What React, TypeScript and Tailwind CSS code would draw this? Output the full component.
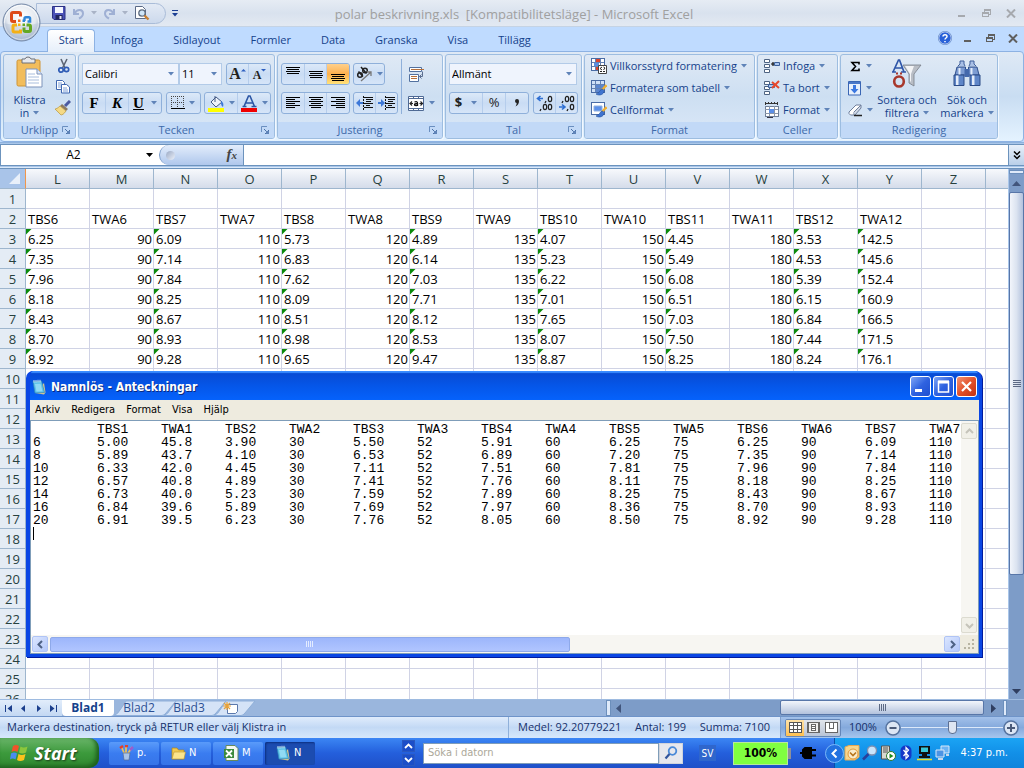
import React from "react";

const UI = "font-['Open_Sans','Noto_Sans',sans-serif]";
const TAHOMA = "font-['DejaVu_Sans_Condensed','Noto_Sans',sans-serif]";

const columns = ["L", "M", "N", "O", "P", "Q", "R", "S", "T", "U", "V", "W", "X", "Y", "Z"];

const sheetHeader = [
  "TBS6", "TWA6", "TBS7", "TWA7", "TBS8", "TWA8", "TBS9", "TWA9",
  "TBS10", "TWA10", "TBS11", "TWA11", "TBS12", "TWA12",
];

const sheetRows = [
  ["6.25", "90", "6.09", "110", "5.73", "120", "4.89", "135", "4.07", "150", "4.45", "180", "3.53", "142.5"],
  ["7.35", "90", "7.14", "110", "6.83", "120", "6.14", "135", "5.23", "150", "5.49", "180", "4.53", "145.6"],
  ["7.96", "90", "7.84", "110", "7.62", "120", "7.03", "135", "6.22", "150", "6.08", "180", "5.39", "152.4"],
  ["8.18", "90", "8.25", "110", "8.09", "120", "7.71", "135", "7.01", "150", "6.51", "180", "6.15", "160.9"],
  ["8.43", "90", "8.67", "110", "8.51", "120", "8.12", "135", "7.65", "150", "7.03", "180", "6.84", "166.5"],
  ["8.70", "90", "8.93", "110", "8.98", "120", "8.53", "135", "8.07", "150", "7.50", "180", "7.44", "171.5"],
  ["8.92", "90", "9.28", "110", "9.65", "120", "9.47", "135", "8.87", "150", "8.25", "180", "8.24", "176.1"],
];

const noteText = [
  ["", "TBS1", "TWA1", "TBS2", "TWA2", "TBS3", "TWA3", "TBS4", "TWA4", "TBS5", "TWA5", "TBS6", "TWA6", "TBS7", "TWA7"],
  ["6", "5.00", "45.8", "3.90", "30", "5.50", "52", "5.91", "60", "6.25", "75", "6.25", "90", "6.09", "110"],
  ["8", "5.89", "43.7", "4.10", "30", "6.53", "52", "6.89", "60", "7.20", "75", "7.35", "90", "7.14", "110"],
  ["10", "6.33", "42.0", "4.45", "30", "7.11", "52", "7.51", "60", "7.81", "75", "7.96", "90", "7.84", "110"],
  ["12", "6.57", "40.8", "4.89", "30", "7.41", "52", "7.76", "60", "8.11", "75", "8.18", "90", "8.25", "110"],
  ["14", "6.73", "40.0", "5.23", "30", "7.59", "52", "7.89", "60", "8.25", "75", "8.43", "90", "8.67", "110"],
  ["16", "6.84", "39.6", "5.89", "30", "7.69", "52", "7.97", "60", "8.36", "75", "8.70", "90", "8.93", "110"],
  ["20", "6.91", "39.5", "6.23", "30", "7.76", "52", "8.05", "60", "8.50", "75", "8.92", "90", "9.28", "110"],
]
  .map((r) => r.join("\t"))
  .join("\n");

function Caret({ color = "#5f83b8" }: { color?: string }) {
  return (
    <svg width="6" height="4" viewBox="0 0 6 4" className="shrink-0" aria-hidden="true">
      <path d="M0 0h6L3 3.6z" fill={color} />
    </svg>
  );
}

function Launcher({ label }: { label: string }) {
  return (
    <button aria-label={label} className="absolute right-[3px] flex size-3 items-center justify-center">
      <svg width="9" height="9" viewBox="0 0 9 9">
        <path d="M.5 6V.5H6" fill="none" stroke="#6b8fc0" />
        <path d="M3 3l4 4M7.5 4v3.5H4" fill="none" stroke="#4a6fa5" />
        <path d="M5 5h3v3H5z" fill="#5f83b8" />
      </svg>
    </button>
  );
}

function Group({
  title,
  width,
  launcher,
  children,
}: {
  title: string;
  width: string;
  launcher?: boolean;
  children: React.ReactNode;
}) {
  return (
    <section
      aria-label={title}
      className={`${width} flex h-[85px] shrink-0 flex-col overflow-hidden rounded-[3px] border border-[#9dbde0] bg-linear-to-b from-[#dfe9f5] via-[#cddff2] to-[#dbe8f8] shadow-[1px_1px_0_#f2f8ff]`}
    >
      <div className="min-h-0 flex-1">{children}</div>
      <h2 className="relative flex h-4 shrink-0 items-center justify-center bg-[#c2d9f7] text-[11px] text-[#3e6aaa]">
        {title}
        {launcher && <Launcher label={`${title} dialogruta`} />}
      </h2>
    </section>
  );
}

function Bar({ children, className = "" }: { children: React.ReactNode; className?: string }) {
  return (
    <div
      className={`flex h-[22px] divide-x divide-[#b5cdec] overflow-hidden rounded-[3px] border border-[#8fb0da] bg-linear-to-b from-[#dce9f8] via-[#c9dcf4] to-[#d6e5f8] ${className}`}
    >
      {children}
    </div>
  );
}

function Btn({
  label,
  children,
  className = "flex-1",
}: {
  label: string;
  children: React.ReactNode;
  className?: string;
}) {
  return (
    <button aria-label={label} className={`flex items-center justify-center gap-1 ${className}`}>
      {children}
    </button>
  );
}

function Combo({ label, value, width }: { label: string; value: string; width: string }) {
  return (
    <label className={`relative flex h-[22px] items-center border border-[#b3cbe8] bg-[#eff4fd] ${width}`}>
      <select aria-label={label} className="w-full appearance-none bg-transparent pl-[2px] text-[11px] text-black outline-none">
        <option>{value}</option>
      </select>
      <span className="pointer-events-none absolute right-1">
        <Caret />
      </span>
    </label>
  );
}

function Lines({ rows, y }: { rows: [number, number][]; y: number }) {
  return (
    <svg width="16" height="16" viewBox="0 0 16 16" shapeRendering="crispEdges">
      {rows.map(([x, w], i) => (
        <rect key={i} x={x} y={y + i * 2} width={w} height="1" fill="#000" />
      ))}
    </svg>
  );
}

const three: [number, number][] = [[1, 14], [2, 12], [1, 14], [2, 12]];
const leftRows: [number, number][] = [[1, 14], [1, 9], [1, 14], [1, 9], [1, 14], [1, 9]];
const centerRows: [number, number][] = [[1, 14], [3, 10], [1, 14], [3, 10], [1, 14], [3, 10]];
const rightRows: [number, number][] = [[1, 14], [6, 9], [1, 14], [6, 9], [1, 14], [6, 9]];

function IndentIcon({ flip }: { flip?: boolean }) {
  return (
    <svg width="18" height="16" viewBox="0 0 18 16" shapeRendering="crispEdges">
      <path d="M8 2.500h9M10 4.500h7M10 6.500h5M8 8.500h9M10 10.500h4M8 12.500h9M7.500 1v2M7.500 4v2M7.500 7v2M7.500 10v2M7.500 13v2" stroke="#111" />
      <path
        d={flip ? "M0 7h3V4l4 4-4 4V9H0z" : "M7 7H4V4L0 8l4 4V9h3z"}
        fill="#3d78d8"
        shapeRendering="auto"
      />
    </svg>
  );
}

function DecimalIcon({ flip }: { flip?: boolean }) {
  return (
    <svg width="18" height="18" viewBox="0 0 18 18" fill="none">
      {flip ? (
        <>
          <path d="M1 13h5M4 10.500l3 2.500-3 2.500" stroke="#2f6fd2" strokeWidth="1.600" />
          <ellipse cx="9" cy="5" rx="1.700" ry="2.700" stroke="#222" strokeWidth="1.200" />
          <ellipse cx="14" cy="5" rx="1.700" ry="2.700" stroke="#222" strokeWidth="1.200" />
          <ellipse cx="14" cy="13" rx="1.700" ry="2.700" stroke="#222" strokeWidth="1.200" />
          <path d="M5 7l-1 2M10 15l-1 2" stroke="#222" strokeWidth="1.300" />
        </>
      ) : (
        <>
          <path d="M2 4.500h5M4.500 2L1.500 4.500l3 2.500" stroke="#2f6fd2" strokeWidth="1.600" />
          <ellipse cx="14" cy="5" rx="1.700" ry="2.700" stroke="#222" strokeWidth="1.200" />
          <ellipse cx="9" cy="13" rx="1.700" ry="2.700" stroke="#222" strokeWidth="1.200" />
          <ellipse cx="14" cy="13" rx="1.700" ry="2.700" stroke="#222" strokeWidth="1.200" />
          <path d="M10 7l-1 2M5 15l-1 2" stroke="#222" strokeWidth="1.300" />
        </>
      )}
    </svg>
  );
}

function FormatIcon({ kind }: { kind: "cond" | "table" | "cell" }) {
  return (
    <svg width="16" height="16" viewBox="0 0 16 16">
      <rect x=".5" y=".5" width="13" height="12" fill={kind === "table" ? "#cfe0f7" : "#fff"} stroke="#4a6ca5" />
      {kind !== "cell" && <path d="M1 4.500h12M1 8.500h12M4.500 1v11M9.500 1v11" stroke="#6482b4" />}
      {kind === "cond" && (
        <>
          <path d="M5 1h4v3H5z" fill="#d9432f" />
          <path d="M3 5h5v3H3z" fill="#5b8fe0" />
          <path d="M5 9h3v3H5z" fill="#d9432f" />
          <path d="M7.500 7.500h8v8h-8z" fill="#fff" stroke="#444" />
          <path d="M11 9l-2 1.500L11 12M9 13.500h2M12.500 9l1.500 1-1.500 2M12 13.500h2" fill="none" stroke="#222" />
        </>
      )}
      {kind === "table" && <path d="M5 5h4v3H5zM10 5h3v3h-3zM5 9h4v3H5z" fill="#5b86cf" />}
      {kind === "cell" && <path d="M3 4h8v5H3z" fill="#5b8fe8" stroke="#90b0e0" />}
      {kind !== "cond" && (
        <>
          <path d="M15.500 5L11 10" stroke="#f0b030" strokeWidth="2.400" />
          <path d="M11.500 9C9 9 9 13 5 14c3 2 8 1 8-3.500z" fill="#3f74d0" stroke="#1f4f9f" strokeWidth=".6" />
        </>
      )}
    </svg>
  );
}

function CellsIcon({ kind }: { kind: "insert" | "delete" | "format" }) {
  if (kind === "format")
    return (
      <svg width="16" height="16" viewBox="0 0 16 16" shapeRendering="crispEdges">
        <path d="M1 1.500h13M1.500 0v3M13.500 0v3M4.500 0v2M7.500 0v2M10.500 0v2" stroke="#333" />
        <path d="M1.500 4.500h13v10h-13z" fill="#fff" stroke="#6f7f98" />
        <path d="M1 7.500h13M1 11.500h13M5.500 4v10M10.500 4v10" stroke="#8a96a8" />
        <path d="M5 7h5v4H5z" fill="#5b8fe8" />
        <path d="M3 15h6v1H3z" fill="#334" />
      </svg>
    );
  return (
    <svg width="16" height="16" viewBox="0 0 16 16">
      <path d="M.5 1.500h5v3h-5zM.5 6.500h5v3h-5zM.5 11.500h5v3h-5z" fill="#fff" stroke="#4d6382" />
      {kind === "insert" ? (
        <>
          <path d="M7 6h4M9 4v4" stroke="#111" strokeWidth="1.200" />
          <path d="M10.500 4.500h5v3h-5z" fill="#a9c5ef" stroke="#3b5f9a" />
        </>
      ) : (
        <>
          <path d="M4.500 4.500h6v3h-6z" fill="#a9c5ef" stroke="#3b5f9a" />
          <path d="M8 2l7 6M15 1L8 8" stroke="#e8472b" strokeWidth="2" />
        </>
      )}
    </svg>
  );
}

function MenuBtn({ icon, label }: { icon: React.ReactNode; label: string }) {
  return (
    <button className="flex h-[22px] items-center gap-[3px] text-[11px] whitespace-nowrap text-[#15428b]">
      {icon}
      {label}
      <span className="ml-px">
        <Caret />
      </span>
    </button>
  );
}

function OfficeButton() {
  return (
    <button aria-label="Office-knappen" className="absolute top-[3px] left-[2px] z-10 size-[39px]">
      <svg width="39" height="39" viewBox="0 0 39 39">
        <defs>
          <radialGradient id="orb" cx=".5" cy=".35" r=".65">
            <stop offset="0" stopColor="#ffffff" />
            <stop offset=".6" stopColor="#e4e9f0" />
            <stop offset="1" stopColor="#8fa3c0" />
          </radialGradient>
        </defs>
        <circle cx="19.500" cy="19.500" r="18.500" fill="url(#orb)" stroke="#7286a5" />
        <circle cx="19.500" cy="19.500" r="17" fill="none" stroke="#fff" strokeOpacity=".8" />
        <path d="M2 20a17.500 17.500 0 0 0 35 0c-10 3-25 3-35 0z" fill="#b8c6da" opacity=".45" />
        <g fill="none" strokeWidth="3">
          <path d="M14 18.500h-3q-1.500 0-1.500-1.500v-6q0-1.500 1.500-1.500h6q1.500 0 1.500 1.500v2.500" stroke="#dd4a18" />
          <path d="M22.500 18v-2.500q0-1.300 1.300-1.300h3q1.300 0 1.300 1.300v3h-2.600" stroke="#2f86d8" strokeWidth="2.400" />
          <path d="M18.500 26.500v2.500h-6q-1.500 0-1.500-1.500v-4q0-1.500 1.500-1.500H15" stroke="#f4b015" />
          <path d="M22 24.500v2.500q0 1.500 1.500 1.500h3.500q1.500 0 1.500-1.500v-3.500q0-1.500-1.500-1.500h-2.500" stroke="#64a822" />
        </g>
        <path d="M16 16.500h2.500V19H16z" fill="#ee7018" />
        <path d="M20.500 16.500H23V19h-2.500z" fill="#2f86d8" />
        <path d="M16 20.500h2.500V23H16z" fill="#f4b015" />
        <path d="M20.500 20.500H23V23h-2.500z" fill="#64a822" />
      </svg>
    </button>
  );
}

function WindowButtons({ color }: { color: string }) {
  return (
    <>
      <button aria-label="Minimera" className="flex h-4 w-[10px] items-end pb-1">
        <svg width="8" height="2"><path d="M0 1h7" stroke={color} strokeWidth="2" /></svg>
      </button>
      <button aria-label="Återställ" className="flex h-4 items-center">
        <svg width="10" height="9" viewBox="0 0 10 9" shapeRendering="crispEdges" fill="none" stroke={color}>
          <path d="M2.500 3V1.500h6v4H7M2 .5h7" />
          <path d="M.5 3.500h6v4h-6zM1 4.500h6" />
        </svg>
      </button>
      <button aria-label="Stäng" className="flex h-4 items-center">
        <svg width="10" height="9" viewBox="0 0 10 9"><path d="M1 .5l8 8M9 .5l-8 8" stroke={color} strokeWidth="2" /></svg>
      </button>
    </>
  );
}

function TitleBar() {
  return (
    <header className="flex h-[27px] shrink-0 items-center border-b border-[#c5d3e4] bg-linear-to-b from-[#e6ecf4] via-[#d9e2ee] to-[#e3e9f2]">
      <div className="ml-9 flex h-[21px] w-[130px] shrink-0 items-center gap-[6px] rounded-r-full border border-[#a9bcd8] bg-linear-to-b from-[#e3eaf5] to-[#ccd9ec] pl-[15px]">
        <button aria-label="Spara">
          <svg width="14" height="14" viewBox="0 0 14 14">
            <path d="M.5.500h12.500v13H2L.5 12z" fill="#4b52b8" stroke="#2c3285" />
            <path d="M3 1h8v6H3z" fill="#f4f6ff" />
            <path d="M3.500 9h7v4.500h-7z" fill="#20255c" />
            <path d="M7.500 10h2v3h-2z" fill="#e6e9fa" />
          </svg>
        </button>
        <button aria-label="Ångra" className="flex items-center gap-[6px]">
          <svg width="13" height="13" viewBox="0 0 13 13" fill="none">
            <path d="M2 2v5h5M2.500 6.500C5 1.500 11 2 11 6.500c0 2.500-2 4-4 5" stroke="#9fb0d4" strokeWidth="2" />
          </svg>
          <Caret color="#a9b3c6" />
        </button>
        <button aria-label="Gör om" className="flex items-center gap-[6px]">
          <svg width="13" height="13" viewBox="0 0 13 13" fill="none">
            <path d="M11 2v5H6M10.500 6.500C8 1.500 2 2 2 6.500c0 2.500 2 4 4 5" stroke="#9fb0d4" strokeWidth="2" />
          </svg>
          <Caret color="#a9b3c6" />
        </button>
        <button aria-label="Förhandsgranska">
          <svg width="16" height="16" viewBox="0 0 16 16">
            <path d="M1.500 1.500h7l3 3v9h-10z" fill="#fff" stroke="#5b6a86" />
            <circle cx="8" cy="8" r="3.200" fill="#cfe6f8" stroke="#5f6c80" strokeWidth="1.300" />
            <path d="M10.500 10.500l4 4" stroke="#c87f32" strokeWidth="2.400" />
          </svg>
        </button>
      </div>
      <button aria-label="Anpassa verktygsfältet" className="ml-[6px] flex flex-col items-center gap-[2px]">
        <span className="h-px w-[6px] bg-[#1c3f94]" />
        <Caret color="#1c3f94" />
      </button>
      <h1 className="flex-1 pt-1 pr-[108px] text-center text-[13px] whitespace-pre text-[#a0a0a0]">
        {"polar beskrivning.xls  [Kompatibilitetsläge] - Microsoft Excel"}
      </h1>
      <div className="flex shrink-0 items-center gap-[14px] pr-2">
        <WindowButtons color="#a6a9ae" />
      </div>
    </header>
  );
}

const tabs = ["Infoga", "Sidlayout", "Formler", "Data", "Granska", "Visa", "Tillägg"];

function TabRow() {
  return (
    <nav className="flex h-[24px] shrink-0 items-end bg-[#bfdbff] pl-[47px] text-[11px] text-[#15428b]">
      <button className="relative z-10 -mb-px flex h-[23px] w-12 items-center justify-center rounded-t-[4px] border border-b-0 border-[#8db2e3] bg-linear-to-b from-white to-[#e6effa] pb-px">
        Start
      </button>
      <div className="ml-4 flex h-[23px] flex-1 items-center gap-[30px] pt-px">
        {tabs.map((t) => (
          <button key={t}>{t}</button>
        ))}
      </div>
      <div className="flex h-[23px] items-center gap-[12px] pr-[6px] pb-[3px]">
        <button aria-label="Hjälp">
          <svg width="14" height="14" viewBox="0 0 14 14">
            <circle cx="7" cy="7" r="6.300" fill="#2a62d8" stroke="#fff" strokeWidth="1" />
            <circle cx="7" cy="7" r="6.700" fill="none" stroke="#3868b8" strokeWidth=".6" />
            <path d="M5 5.500C5 3 9.200 3 9 5.500 9 7 7 7 7 8.500M7 10v1.300" stroke="#fff" strokeWidth="1.500" fill="none" />
          </svg>
        </button>
        <WindowButtons color="#5f5f5f" />
      </div>
    </nav>
  );
}

function Ribbon() {
  return (
    <div className="flex h-[91px] shrink-0 gap-[2px] overflow-hidden rounded-[4px] border border-[#8db2e3] bg-linear-to-b from-[#dfe9f5] via-[#c9ddf2] to-[#e4f3ff] px-[2px] pt-[2px]">
      <Group title="Urklipp" width="w-[73px]" launcher>
        <div className="flex h-full gap-1 px-1">
          <button className="flex w-11 flex-col items-center text-[11px] leading-[13px] text-[#15428b]">
            <svg width="30" height="34" viewBox="0 0 30 34" className="mt-px shrink-0">
              <rect x="2" y="4" width="23" height="26" rx="1.500" fill="#f2bd5c" stroke="#cf9434" />
              <path d="M7 3h3q.5-2 3-2t3 2h4v4H7z" fill="#e6e8ec" stroke="#6d7078" />
              <path d="M11 13h11l5 5v13H11z" fill="#fff" stroke="#7d93bb" />
              <path d="M22 13v5h5" fill="#dfe8f7" stroke="#7d93bb" />
              <path d="M13 18h7M13 21h11M13 24h11M13 27h11" stroke="#a9bedd" />
            </svg>
            <span className="mt-[3px]">Klistra</span>
            <span className="flex items-center gap-1">
              in <Caret />
            </span>
          </button>
          <div className="flex flex-col items-center gap-[5px] pt-[3px]">
            <button aria-label="Klipp ut">
              <svg width="15" height="16" viewBox="0 0 15 16">
                <path d="M5 1l4 9M11 1L6.500 10" stroke="#5d6675" strokeWidth="1.600" />
                <circle cx="5" cy="12" r="2.200" fill="none" stroke="#2f5cb5" strokeWidth="1.700" />
                <circle cx="10.500" cy="11.500" r="2.200" fill="none" stroke="#2f5cb5" strokeWidth="1.700" />
              </svg>
            </button>
            <button aria-label="Kopiera">
              <svg width="16" height="16" viewBox="0 0 16 16">
                <path d="M1.500 1.500h6l2 2v7h-8z" fill="#fff" stroke="#4068b0" />
                <path d="M3 4h4M3 6h5M3 8h5" stroke="#7fa0d8" />
                <path d="M6.500 5.500h5l3 2.500v6h-8z" fill="#fff" stroke="#4068b0" />
                <path d="M8 9h4M8 11h5M8 13h5" stroke="#7fa0d8" />
              </svg>
            </button>
            <button aria-label="Hämta format">
              <svg width="16" height="16" viewBox="0 0 16 16">
                <path d="M15 1l-5 5" stroke="#4b5aa0" strokeWidth="3" />
                <path d="M7 4l6 5-2 2-6-5z" fill="#8d7a60" />
                <path d="M5 6l6 5c-2 3-4 4-5 4L0 9c1 0 3-1 5-3z" fill="#f4d985" stroke="#b8963e" strokeWidth=".7" />
              </svg>
            </button>
          </div>
        </div>
      </Group>

      <Group title="Tecken" width="w-[197px]" launcher>
        <div className="flex flex-col gap-[7px] px-[3px] pt-2">
          <div className="flex justify-between">
            <div className="flex">
              <Combo label="Teckensnitt" value="Calibri" width="w-[97px]" />
              <Combo label="Teckenstorlek" value="11" width="w-[43px]" />
            </div>
            <Bar className="w-[45px]">
              <Btn label="Öka teckenstorlek">
                <span aria-hidden="true" className="font-['Liberation_Serif',serif] text-[16px] font-bold text-[#222]">A</span>
                <svg width="5" height="12" className="-ml-1"><path d="M0 3.500h5L2.500 1z" fill="#2d5fc0" /></svg>
              </Btn>
              <Btn label="Minska teckenstorlek">
                <span aria-hidden="true" className="pt-[2px] font-['Liberation_Serif',serif] text-[12px] font-bold text-[#222]">A</span>
                <svg width="5" height="12" className="-ml-1"><path d="M0 1h5L2.500 3.500z" fill="#2d5fc0" /></svg>
              </Btn>
            </Bar>
          </div>
          <div className="flex justify-between font-['Liberation_Serif',serif] text-[15px] leading-5 font-bold text-black">
            <Bar className="w-[80px]">
              <button className="w-[23px]">F</button>
              <button className="w-[23px] italic">K</button>
              <button className="flex flex-1 items-center justify-center gap-[7px]">
                <span className="underline">U</span> <Caret />
              </button>
            </Bar>
            <Bar className="w-[35px]">
              <Btn label="Kantlinjer">
                <svg width="14" height="14" viewBox="0 0 14 14" shapeRendering="crispEdges">
                  <path d="M0 .5h13M0 6.500h13M.5 0v12M6.500 0v12M12.500 0v12" stroke="#444" strokeDasharray="1 1" />
                  <path d="M0 12h14v1H0z" fill="#000" />
                </svg>
                <Caret />
              </Btn>
            </Bar>
            <Bar className="w-[67px]">
              <Btn label="Fyllningsfärg">
                <svg width="17" height="17" viewBox="0 0 17 17">
                  <path d="M3 7l5-5 6 5-6 5z" fill="#eef3fb" stroke="#445a85" />
                  <path d="M7 1v6" stroke="#445a85" />
                  <path d="M13 6c2 1 3 3 2 6-2-1-2-3-2-6z" fill="#3c78d8" />
                  <path d="M0 13h16v4H0z" fill="#ff0" />
                </svg>
                <Caret />
              </Btn>
              <Btn label="Teckenfärg">
                <svg width="17" height="17" viewBox="0 0 17 17">
                  <path d="M3 11.500L7.500 1h1.500l4.500 10.500M5 8h6.500M1.500 11.500h4M10.500 11.500h5" stroke="#2c56a5" strokeWidth="1.600" fill="none" />
                  <path d="M0 13h16v4H0z" fill="#f00000" />
                </svg>
                <Caret />
              </Btn>
            </Bar>
          </div>
        </div>
      </Group>

      <Group title="Justering" width="w-[166px]" launcher>
        <div className="flex px-[3px] pt-2">
          <div className="flex flex-col gap-[7px]">
            <div className="flex gap-[3px]">
              <Bar className="w-[69px]">
                <Btn label="Justera överst"><Lines rows={three} y={1} /></Btn>
                <Btn label="Centrera lodrätt"><Lines rows={three} y={5} /></Btn>
                <Btn label="Justera nederst" className="flex-1 bg-linear-to-b from-[#ffd08a] via-[#fdb14c] to-[#ffe27a]"><Lines rows={three} y={8} /></Btn>
              </Bar>
              <Bar className="w-[32px]">
                <Btn label="Orientering">
                  <svg width="18" height="16" viewBox="0 0 18 16" fill="none" className="shrink-0">
                    <circle cx="5" cy="9" r="2.300" stroke="#222" strokeWidth="1.500" />
                    <path d="M3.500 5.500l4.500 5M6 1l5.500 6.500" stroke="#222" strokeWidth="1.500" />
                    <circle cx="10" cy="4.500" r="2.300" stroke="#222" strokeWidth="1.500" />
                    <path d="M6 15l10-9M12 6h4v4" stroke="#777" strokeWidth="1.300" />
                  </svg>
                  <Caret />
                </Btn>
              </Bar>
            </div>
            <div className="flex gap-[3px]">
              <Bar className="w-[69px]">
                <Btn label="Vänsterjustera"><Lines rows={leftRows} y={2} /></Btn>
                <Btn label="Centrera"><Lines rows={centerRows} y={2} /></Btn>
                <Btn label="Högerjustera"><Lines rows={rightRows} y={2} /></Btn>
              </Bar>
              <Bar className="w-[45px]">
                <Btn label="Minska indrag"><IndentIcon /></Btn>
                <Btn label="Öka indrag"><IndentIcon flip /></Btn>
              </Bar>
            </div>
          </div>
          <div className="-mt-1 ml-[3px] border-l border-[#8fb0da] pl-[6px]" />
          <div className="flex flex-col gap-[7px]">
            <Btn label="Radbyt text" className="h-[22px] w-[17px]">
              <svg width="17" height="17" viewBox="0 0 17 17">
                <path d="M1.500 1.500h12v4h-12zM1.500 8.500h9v7h-9z" fill="#fff" stroke="#52719f" />
                <path d="M3 3.500h13M3 10.500h6M3 12.500h6" stroke="#b5703c" strokeWidth="1.200" />
                <path d="M14.500 5.500v5l-3 0M13.500 8.500l-2 2 2 2" fill="none" stroke="#5b6e90" />
              </svg>
            </Btn>
            <Btn label="Centrera över kolumner" className="h-[22px]">
              <svg width="17" height="17" viewBox="0 0 17 17">
                <path d="M.5 1.500h15v14H.5z" fill="#fff" stroke="#4f6a95" />
                <path d="M1 3.500h14M1 13.500h14M5.500 1v3M10.500 1v3M5.500 13v3M10.500 13v3" stroke="#4f6a95" />
                <path d="M4 6.500L2 8.500l2 2M12.500 6.500l2 2-2 2M2 8.500h3M11.500 8.500h3" fill="none" stroke="#222" strokeWidth="1.200" />
                <path d="M6.500 7q3-1 3 1v3M9.500 8.500q-3 0-3 1.200t3 .7" fill="none" stroke="#111" strokeWidth="1.300" />
              </svg>
              <Caret />
            </Btn>
          </div>
        </div>
      </Group>

      <Group title="Tal" width="w-[137px]" launcher>
        <div className="flex flex-col gap-[7px] px-[3px] pt-2">
          <Combo label="Talformat" value="Allmänt" width="w-[128px]" />
          <div className="flex justify-between">
            <Bar className="w-[80px] text-[13px] text-[#222]">
              <button className="flex w-[33px] items-center justify-center gap-[9px] font-bold">
                $ <Caret />
              </button>
              <button className="flex-1">%</button>
              <Btn label="Tusentalsavgränsare">
                <svg width="6" height="9"><path d="M1 2a2 2 0 1 1 4 0q0 3.500-3.500 5.500 1-1.500 1.200-3.500Q1 4 1 2z" fill="#222" /></svg>
              </Btn>
            </Bar>
            <Bar className="w-[45px]">
              <Btn label="Öka decimal"><DecimalIcon /></Btn>
              <Btn label="Minska decimal"><DecimalIcon flip /></Btn>
            </Bar>
          </div>
        </div>
      </Group>

      <Group title="Format" width="w-[171px]">
        <div className="flex flex-col pl-[6px]">
          <MenuBtn icon={<FormatIcon kind="cond" />} label="Villkorsstyrd formatering" />
          <MenuBtn icon={<FormatIcon kind="table" />} label="Formatera som tabell" />
          <MenuBtn icon={<FormatIcon kind="cell" />} label="Cellformat" />
        </div>
      </Group>

      <Group title="Celler" width="w-[81px]">
        <div className="flex flex-col pl-[6px]">
          <MenuBtn icon={<CellsIcon kind="insert" />} label="Infoga" />
          <MenuBtn icon={<CellsIcon kind="delete" />} label="Ta bort" />
          <MenuBtn icon={<CellsIcon kind="format" />} label="Format" />
        </div>
      </Group>

      <Group title="Redigering" width="w-[158px]">
        <div className="flex">
          <div className="flex w-[34px] flex-col pl-1">
            <Btn label="Summa" className="h-[22px]">
              <svg width="13" height="13" viewBox="0 0 13 13"><path d="M10 4.500V2.500H3L6.500 6.500 3 10.500h7V8.500" fill="none" stroke="#000" strokeWidth="1.600" /></svg>
              <Caret />
            </Btn>
            <Btn label="Fyllning" className="h-[22px]">
              <svg width="14" height="15" viewBox="0 0 14 15">
                <path d="M.5.500h12v13.500H.5z" fill="#e8f0fc" stroke="#3a66b4" />
                <path d="M1 1h11v2H1z" fill="#4a78c8" />
                <path d="M5 4h3v4h2.500l-4 4.500-4-4.500H5z" fill="#3c78e0" />
              </svg>
              <Caret />
            </Btn>
            <Btn label="Radera" className="h-[22px]">
              <svg width="15" height="14" viewBox="0 0 15 14">
                <path d="M1 9l7-7h5L6 9v3H2.500L1 10.500z" fill="#fff" stroke="#6f7f9c" />
                <path d="M6 9l7-7v3l-6 7" fill="#d3dbe8" stroke="#6f7f9c" />
                <path d="M6 12.500h8" stroke="#222" strokeWidth="1.300" />
              </svg>
              <Caret />
            </Btn>
          </div>
          <button className="ml-px flex w-[62px] flex-col items-center text-[11px] leading-[13px] text-[#15428b]">
            <svg width="30" height="30" viewBox="0 0 30 30" className="mt-1 shrink-0">
              <path d="M1 13L6.500 1h1L12 13M3.500 9h6.500M0 13h4M9 13h5" fill="none" stroke="#2f56a8" strokeWidth="1.700" />
              <path d="M11 6h18l-7 9v12l-5-3v-9z" fill="#b9bec6" stroke="#777d88" strokeWidth=".8" />
              <path d="M13 7h9l-3 8v8l-1-1v-7z" fill="#f3f4f6" />
              <ellipse cx="7" cy="22.500" rx="4.800" ry="5" fill="none" stroke="#a8382c" strokeWidth="2.600" />
              <path d="M4 14.500h2M8 14.500h2" stroke="#a8382c" strokeWidth="2" />
            </svg>
            <span className="mt-1 whitespace-nowrap">Sortera och</span>
            <span className="flex items-center gap-1">filtrera <Caret /></span>
          </button>
          <button className="flex w-[58px] flex-col items-center text-[11px] leading-[13px] text-[#15428b]">
            <svg width="30" height="30" viewBox="0 0 30 30" className="mt-1 shrink-0">
              <path d="M6 7l2-2V2h4v3l1 2M17 7l1-2V2h4v3l2 2" fill="#a9c0e6" stroke="#3f5f9b" />
              <path d="M5 8h8.500v8H3zM16.500 8H25l2 8H16.500z" fill="#7d9cd2" stroke="#2f4f8c" />
              <path d="M2 16h10v10.500H2zM18 16h10v10.500H18z" fill="#5f86c8" stroke="#2b4a86" />
              <path d="M12.500 10h5v8h-5z" fill="#4468ab" />
              <path d="M4 16.500h2.500v9.500H4zM20 16.500h2.500v9.500H20zM6.500 9h2v6.500h-2zM18.500 9h2v6.500h-2z" fill="#e3ecfa" />
            </svg>
            <span className="mt-1 whitespace-nowrap">Sök och</span>
            <span className="flex items-center gap-1">markera <Caret /></span>
          </button>
        </div>
      </Group>
    </div>
  );
}

function FormulaBar() {
  return (
    <div className="flex h-[27px] shrink-0 flex-col border-t border-[#8fb3dd] bg-[#a9c6ea] pt-px">
      <div className="flex h-[22px] border-y border-[#6c93bd] bg-white">
        <label className="flex w-[159px] items-center border-l border-[#6c93bd] pr-[6px]">
          <input aria-label="Namnruta" defaultValue="A2" className="w-0 flex-1 pb-px text-center text-[12px] leading-4 text-black outline-none" />
          <svg width="7" height="4"><path d="M0 0h7L3.500 4z" fill="#000" /></svg>
        </label>
        <div className="flex w-[85px] items-center justify-between rounded-l-full border-r border-l border-r-[#6c93bd] border-l-[#7b9cc9] bg-linear-to-b from-[#e3edfb] to-[#afc7ec] pr-[6px] pl-[6px]">
          <span className="size-[9px] rounded-full bg-linear-to-br from-[#9aa9c4] to-[#eef2fa]" />
          <button aria-label="Infoga funktion" className="pb-[2px] font-['Liberation_Serif',serif] text-[15px] leading-4 font-bold text-[#444] italic">
            f<span className="text-[11px]">x</span>
          </button>
        </div>
        <input aria-label="Formelfält" className="min-w-0 flex-1 outline-none" />
        <button aria-label="Expandera formelfältet" className="flex w-4 items-center justify-center border-l border-[#6c93bd] bg-linear-to-b from-[#e8f0fa] to-[#b9cfe9]">
          <svg width="8" height="9" fill="none"><path d="M1 .5l3 3 3-3M1 4.500l3 3 3-3" stroke="#000" strokeWidth="1.500" /></svg>
        </button>
      </div>
      <div className="mt-px flex-1 border-b border-[#6c93bd] bg-[#dbe9f9]" />
    </div>
  );
}

function cellBody(row: number, col: number) {
  if (row === 2) return sheetHeader[col] ?? "";
  if (row >= 3 && row <= 9) return sheetRows[row - 3][col] ?? "";
  return "";
}

function Sheet() {
  return (
    <table className="w-full table-fixed border-separate border-spacing-0 bg-white text-[13px] leading-[17px] text-black">
      <colgroup>
        <col className="w-[26px]" />
        {columns.map((c) => (
          <col key={c} className="w-16" />
        ))}
        <col />
      </colgroup>
      <thead>
        <tr className="h-5 bg-linear-to-b from-[#f7f9fc] to-[#d3dbe9] text-[#27413e]">
          <th aria-label="Markera allt" className="h-5 border-r border-b border-[#9eb6ce] border-r-[#f0964b] bg-[#a9c4e9] p-0">
            <svg width="25" height="19" className="block"><path d="M20 4v11H9z" fill="#e9f0fa" /></svg>
          </th>
          {columns.map((c) => (
            <th key={c} className="border-r border-b border-[#9eb6ce] px-0 pt-[2px] pb-0 font-normal">
              {c}
            </th>
          ))}
          <th className="border-b border-[#9eb6ce] p-0" />
        </tr>
      </thead>
      <tbody>
        {Array.from({ length: 26 }, (_, i) => i + 1).map((r) => (
          <tr key={r} className="h-5">
            <th className="h-5 border-r border-b border-[#9eb6ce] bg-[#e4ecf5] px-0 pt-[2px] pb-0 text-center font-normal text-[#27413e]">{r}</th>
            {columns.map((c, i) => {
              const marked = r >= 3 && r <= 9 && (i % 2 === 0 || i === 13) && i < 14;
              const right = r >= 3 && i % 2 === 1 && i < 13;
              return (
                <td
                  key={c}
                  className={`relative border-r border-b border-[#d0d3e5] pt-[2px] pb-0 pl-[2px] ${right ? "pr-px text-right" : ""}`}
                >
                  {marked && (
                    <svg width="6" height="6" className="absolute top-0 left-0">
                      <path d="M0 0h5.500L0 5.500z" fill="#0b8a0b" />
                    </svg>
                  )}
                  {cellBody(r, i)}
                </td>
              );
            })}
            <td className="border-b border-[#d0d3e5] p-0" />
          </tr>
        ))}
      </tbody>
    </table>
  );
}

function NotepadIcon({ size = 16 }: { size?: number }) {
  return (
    <svg width={size} height={size} viewBox="0 0 16 16" className="shrink-0">
      <path d="M4 14l9 1.500 1.500-2L13 4" fill="#d8c890" />
      <path d="M2 2.500l8.500-.500 3 11.500L4 14z" fill="#5fc4ea" stroke="#2f86b8" strokeWidth=".7" />
      <path d="M4 5l5.500-.3 2 7.500-6 .3z" fill="#a6e4f8" opacity=".7" />
      <path d="M3 1v2.500M5 1v2.500M7 .8v2.500M9 .8v2.500" stroke="#e8f4fa" strokeWidth=".9" />
    </svg>
  );
}

function XpButton({ label, red, children }: { label: string; red?: boolean; children: React.ReactNode }) {
  return (
    <button
      aria-label={label}
      className={`flex size-[21px] items-center justify-center rounded-[3px] border border-white bg-linear-to-br ${
        red ? "from-[#f09070] via-[#e2512a] to-[#c03010]" : "from-[#7fa4f5] via-[#2f62e0] to-[#1f4fd0]"
      }`}
    >
      <svg width="15" height="15" viewBox="0 0 15 15" fill="none">
        {children}
      </svg>
    </button>
  );
}

function XpScroll({ label, path, disabled }: { label: string; path: string; disabled?: boolean }) {
  return (
    <button
      aria-label={label}
      className={`flex size-4 shrink-0 items-center justify-center rounded-[2px] border ${
        disabled ? "border-[#dcdbd0] bg-[#f1f0e8]" : "border-[#b0c4f5] bg-linear-to-br from-[#dbe6ff] to-[#b4c8fa]"
      }`}
    >
      <svg width="9" height="9" viewBox="0 0 9 9" fill="none">
        <path d={path} stroke={disabled ? "#c5c4ba" : "#4d6185"} strokeWidth="2" />
      </svg>
    </button>
  );
}

function Notepad() {
  return (
    <section
      aria-label="Namnlös - Anteckningar"
      className={`absolute top-[202px] right-[42px] left-[26px] z-20 flex h-[286px] flex-col overflow-hidden rounded-t-[7px] border-r-[3px] border-b-[3px] border-l-[4px] border-[#0a46e4] bg-[#0a46e4] shadow-[1px_1px_0_#001a9c] ${TAHOMA}`}
    >
      <div className="-mr-[3px] -ml-1 flex h-[29px] shrink-0 items-center bg-linear-to-b from-[#0848d0] via-[#0556e8] to-[#0562fc] pt-[2px] pr-[5px] pl-[5px] shadow-[inset_0_2px_1px_#3a8cff]">
        <NotepadIcon />
        <h2 className="ml-1 flex-1 pt-px text-[12px] font-bold text-white [text-shadow:1px_1px_0_#0a2a80]">
          Namnlös - Anteckningar
        </h2>
        <div className="flex gap-[2px]">
          <XpButton label="Minimera"><path d="M2 11.500h7" stroke="#fff" strokeWidth="3" /></XpButton>
          <XpButton label="Maximera"><path d="M2 2.500h11M2.500 2v11h10V2" stroke="#fff" strokeWidth="1.500" /><path d="M2 3h11" stroke="#fff" strokeWidth="3" /></XpButton>
          <XpButton label="Stäng" red><path d="M3 3l9 9M12 3l-9 9" stroke="#fff" strokeWidth="2.200" /></XpButton>
        </div>
      </div>
      <div className="flex h-5 shrink-0 items-center gap-[11px] bg-[#eeebdf] pl-[5px] text-[11px] text-black">
        {["Arkiv", "Redigera", "Format", "Visa", "Hjälp"].map((m) => (
          <button key={m}>{m}</button>
        ))}
      </div>
      <div className="flex min-h-0 flex-1 flex-col border border-[#7f9db9] bg-white">
        <div className="relative flex min-h-0 flex-1">
          <textarea
            aria-label="Text"
            wrap="off"
            spellCheck={false}
            defaultValue={noteText + "\n"}
            className="min-w-0 flex-1 resize-none overflow-hidden border-0 bg-white pt-[2px] pl-[2px] font-['Liberation_Mono','DejaVu_Sans_Mono',monospace] text-[13px] leading-[13px] text-black outline-none [tab-size:64px]"
          />
          <span aria-hidden="true" className="absolute top-[106px] left-[2px] h-[13px] w-px bg-black" />
          <div className="flex w-[17px] shrink-0 flex-col justify-between bg-[#f7f6f2] py-[2px]">
            <XpScroll label="Rulla upp" path="M1 6l3.500-3.500L8 6" disabled />
            <XpScroll label="Rulla ned" path="M1 3l3.500 3.500L8 3" disabled />
          </div>
        </div>
        <div className="flex h-[18px] shrink-0 items-center bg-[#f7f6f2]">
          <div className="flex min-w-0 flex-1 items-center gap-[2px] pl-px">
            <XpScroll label="Rulla vänster" path="M6 1L2.500 4.500 6 8" />
            <div className="flex h-[15px] w-[56%] items-center justify-center gap-px rounded-[2px] border border-[#8ea9ea] bg-linear-to-b from-[#9db6fb] to-[#b0c5ff]">
              {[0, 1, 2, 3].map((i) => (
                <span key={i} className="h-[6px] w-px bg-[#e4ecff]" />
              ))}
            </div>
            <div className="flex-1" />
            <XpScroll label="Rulla höger" path="M3 1l3.500 3.500L3 8" />
          </div>
          <div className="flex h-full w-[18px] items-end justify-end bg-[#eeebdf] p-[3px]">
            <svg width="11" height="11" shapeRendering="crispEdges">
              <path d="M8 0h2v2H8zM8 4h2v2H8zM4 4h2v2H4zM8 8h2v2H8zM4 8h2v2H4zM0 8h2v2H0z" fill="#b8b4a2" />
            </svg>
          </div>
        </div>
      </div>
    </section>
  );
}

function VScroll() {
  return (
    <div className="flex w-4 shrink-0 flex-col items-center border-l border-[#a9c6ea] bg-[#7d9cc8]">
      <span className="mt-px h-1 w-full border border-[#6c8fbc] bg-[#dfeafa]" />
      <button aria-label="Rulla upp" className="flex h-[18px] items-center">
        <svg width="9" height="5"><path d="M0 5h9L4.500 0z" fill="#41557c" /></svg>
      </button>
      <div className="flex h-[383px] w-[15px] flex-col items-center justify-center gap-px rounded-[2px] border border-[#5876a8] bg-linear-to-r from-[#f2f5fb] via-[#dbe3f0] to-[#b3c2dd]">
        {[0, 1, 2, 3].map((i) => (
          <span key={i} className="h-px w-2 bg-[#5d6a85]" />
        ))}
      </div>
      <div className="flex-1" />
      <button aria-label="Rulla ned" className="mb-[5px]">
        <svg width="9" height="5" className="block"><path d="M0 0h9L4.500 5z" fill="#2f3e60" /></svg>
      </button>
    </div>
  );
}

function SheetTab({ children }: { children: React.ReactNode }) {
  return (
    <button className="relative flex h-4 w-[50px] items-center justify-center text-[#2b4f93]">
      <svg width="64" height="16" viewBox="0 0 64 16" className="absolute left-0">
        <path d="M0 15.500Q4 14 6 10L12 1h50L52 13q-2 2.500-4 2.500z" fill="#d5e3f7" stroke="#8fafd9" />
      </svg>
      <span className="relative">{children}</span>
    </button>
  );
}

const sheetNav = [
  { label: "Första bladet", path: "M1 1h1v7H1zM8 1v7L3.500 4.500z" },
  { label: "Föregående blad", path: "M6 1v7L2 4.500z" },
  { label: "Nästa blad", path: "M3 1v7l4-3.500z" },
  { label: "Sista bladet", path: "M7 1h1v7H7zM1 1v7l4.500-3.500z" },
];

function SheetTabs() {
  return (
    <div className="flex h-[17px] shrink-0 overflow-hidden border-t border-[#9ebbe0] bg-[#9ab6dd] text-[12px]">
      <div className="flex w-[62px] shrink-0 items-center justify-around bg-linear-to-b from-[#e2edfb] to-[#c3d8f3] px-px">
        {sheetNav.map((n) => (
          <button key={n.label} aria-label={n.label}>
            <svg width="9" height="9"><path d={n.path} fill="#1c3f8c" /></svg>
          </button>
        ))}
      </div>
      <button className="flex h-4 w-[52px] shrink-0 items-center justify-center rounded-b-[4px] bg-white font-bold text-[#15428b]">Blad1</button>
      <div className="flex min-w-0 flex-1">
        <SheetTab>Blad2</SheetTab>
        <SheetTab>Blad3</SheetTab>
        <div className="relative flex h-4 w-[44px] items-center">
          <svg width="42" height="16" viewBox="0 0 42 16" className="absolute left-0">
            <path d="M0 15.500Q4 14 6 10L12 1h29L31 13q-2 2.500-4 2.500z" fill="#d5e3f7" stroke="#8fafd9" />
          </svg>
          <button aria-label="Infoga kalkylblad" className="relative ml-[9px]">
            <svg width="16" height="12" viewBox="0 0 16 12">
              <path d="M4.500 2.500h10v7l-2 2h-8z" fill="#fff" stroke="#5b78ac" />
              <path d="M4 0v8M0 4h8M1 1l6 6M7 1L1 7" stroke="#e8a33a" strokeWidth="1.200" />
            </svg>
          </button>
        </div>
      </div>
      <div className="flex w-[418px] shrink-0 bg-[#7d9cc8]">
        <span className="h-full w-[5px] border border-[#6c8fbc] bg-[#dfeafa]" />
        <button aria-label="Rulla vänster" className="flex w-[10px] items-center justify-end">
          <svg width="5" height="9"><path d="M5 0v9L0 4.500z" fill="#41557c" /></svg>
        </button>
        <div className="flex-1" />
        <div className="flex h-[15px] w-[204px] items-center justify-center gap-px rounded-[2px] border border-[#5876a8] bg-linear-to-b from-[#f2f5fb] via-[#d3dcec] to-[#b3c2dd]">
          {[0, 1, 2, 3].map((i) => (
            <span key={i} className="h-[7px] w-px bg-[#5d6a85]" />
          ))}
        </div>
        <button aria-label="Rulla höger" className="flex w-[19px] items-center justify-center">
          <svg width="5" height="9"><path d="M0 0v9l5-4.500z" fill="#2f3e60" /></svg>
        </button>
        <span className="h-full w-1 border border-[#6c8fbc] bg-[#dfeafa]" />
        <span className="w-[17px]" />
      </div>
    </div>
  );
}

function StatusBar() {
  return (
    <footer className="flex h-[22px] shrink-0 items-stretch border-t border-[#6f94c9] bg-linear-to-b from-[#e0ecfc] via-[#c3d9f5] to-[#d6e8fc] text-[11px] text-[#15306b]">
      <p className="flex flex-1 items-center pl-[7px]">Markera destination, tryck på RETUR eller välj Klistra in</p>
      <div className="flex w-[272px] shrink-0 items-center justify-between border-l border-[#8fb0da] pr-[10px] pl-[9px]">
        <span>Medel: 92.20779221</span>
        <span>Antal: 199</span>
        <span>Summa: 7100</span>
      </div>
      <div className="flex w-[244px] shrink-0 items-center border-l border-[#7f9fcc] bg-linear-to-b from-[#a3c1ea] via-[#84a9dc] to-[#a6c6ee] pr-[5px] pl-[4px]">
        <div className="flex h-[18px] w-[56px] shrink-0 overflow-hidden rounded-[2px] border border-[#6486b8] bg-linear-to-b from-[#e2e6ec] to-[#b9c4d6]">
          <Btn label="Normal" className="flex-1 bg-linear-to-b from-[#ffe2a6] to-[#ffc04c]">
            <svg width="13" height="11" viewBox="0 0 13 11" shapeRendering="crispEdges"><path d="M0 0h13v11H0z" fill="#555" /><path d="M1 1h3v2H1zM5 1h3v2H5zM9 1h3v2H9zM1 4h3v3H1zM5 4h3v3H5zM9 4h3v3H9zM1 8h3v2H1zM5 8h3v2H5zM9 8h3v2H9z" fill="#fff" /></svg>
          </Btn>
          <Btn label="Sidlayout">
            <svg width="13" height="11" viewBox="0 0 13 11" shapeRendering="crispEdges"><path d="M0 0h13v11H0z" fill="#666" /><path d="M2 1h9v9H2z" fill="#eee" /><path d="M4 2h5v7H4z" fill="#666" /><path d="M5 3h3v1H5zM5 5h3v1H5zM5 7h3v1H5z" fill="#fff" /></svg>
          </Btn>
          <Btn label="Sidbrytning">
            <svg width="13" height="11" viewBox="0 0 13 11" shapeRendering="crispEdges"><path d="M0 0h13v11H0z" fill="#666" /><path d="M1 1h3v9H1zM5 1h3v5H5zM9 1h3v9H9zM4 7h5v3H4z" fill="#fff" /></svg>
          </Btn>
        </div>
        <button className="ml-2 w-9 text-left">100%</button>
        <button aria-label="Zooma ut" className="shrink-0">
          <svg width="16" height="16"><circle cx="8" cy="8" r="7" fill="#dce6f4" stroke="#56739f" strokeWidth="1.500" /><path d="M4.500 8h7" stroke="#4a5a78" strokeWidth="2" /></svg>
        </button>
        <input
          type="range"
          aria-label="Zoom"
          defaultValue={50}
          className="h-4 min-w-0 flex-1 appearance-none bg-[linear-gradient(#dce9fa,#dce9fa)] bg-[length:100%_1px] bg-center bg-no-repeat [&::-webkit-slider-thumb]:h-[13px] [&::-webkit-slider-thumb]:w-[9px] [&::-webkit-slider-thumb]:appearance-none [&::-webkit-slider-thumb]:rounded-b-[4px] [&::-webkit-slider-thumb]:border [&::-webkit-slider-thumb]:border-[#5c6f92] [&::-webkit-slider-thumb]:bg-[#dde5f2]"
        />
        <button aria-label="Zooma in" className="shrink-0">
          <svg width="16" height="16"><circle cx="8" cy="8" r="7" fill="#dce6f4" stroke="#56739f" strokeWidth="1.500" /><path d="M4 8h8M8 4v8" stroke="#4a5a78" strokeWidth="2" /></svg>
        </button>
      </div>
    </footer>
  );
}

function TaskButton({ icon, label, active }: { icon: React.ReactNode; label: string; active?: boolean }) {
  return (
    <button
      className={`flex h-[23px] w-[50px] items-center gap-[3px] rounded-[2px] pl-[10px] text-[11px] text-white ${
        active ? "bg-[#1c4cb0] shadow-[inset_1px_1px_2px_#0c2f80]" : "bg-linear-to-b from-[#5a9bfa] via-[#3a7cf0] to-[#3674e8]"
      }`}
    >
      {icon}
      {label}
    </button>
  );
}

function Taskbar() {
  return (
    <div className={`flex h-[30px] shrink-0 items-center bg-linear-to-b from-[#3c86f4] via-[#245fdc] to-[#1f50c8] ${TAHOMA}`}>
      <button className="flex h-[30px] w-[99px] shrink-0 items-center gap-[5px] rounded-r-[10px] bg-linear-to-b from-[#68b468] via-[#3c9a3c] to-[#2f862f] pl-[10px] font-['Open_Sans','Noto_Sans',sans-serif] text-[18px] font-bold text-white italic shadow-[inset_-3px_-2px_4px_#1d5f1d] [text-shadow:1px_1px_2px_#1a3a1a]">
        <svg width="19" height="18" viewBox="0 0 19 18" className="shrink-0">
          <path d="M3 2q3-2 6 0L7.500 8q-3-2-6 0z" fill="#f0532a" />
          <path d="M10.500 2.500q3 2 7 0l-1.500 6q-4 2-7 0z" fill="#8cc63c" />
          <path d="M1 9.500q3-2 6 0l-1.500 6q-3-2-5.500 0z" fill="#4a8cf0" />
          <path d="M8.500 10q3 2 7 0l-1.500 6q-4 2-7 0z" fill="#fbc21c" />
        </svg>
        Start
      </button>
      <div className="ml-[10px] flex gap-[2px]">
        <TaskButton
          label="p."
          icon={
            <svg width="15" height="16" viewBox="0 0 15 16">
              <path d="M2 1l4 9M7 0v9M13 2L8 10" stroke="#e8c060" strokeWidth="1.800" />
              <path d="M1 3l3-2M6 1h3" stroke="#e04030" strokeWidth="2.500" />
              <path d="M11 5l3-3" stroke="#9a5cd0" strokeWidth="2.500" />
              <path d="M4 8h7l-1 7H5z" fill="#a8c4e8" stroke="#546c98" strokeWidth=".7" />
            </svg>
          }
        />
        <TaskButton
          label="N"
          icon={
            <svg width="15" height="14" viewBox="0 0 15 14">
              <path d="M1 2h5l1.500 2H13v9H1z" fill="#f0c850" stroke="#a88420" strokeWidth=".7" />
              <path d="M3 6h11.500L13 13H1z" fill="#fbe48c" stroke="#b89430" strokeWidth=".6" />
            </svg>
          }
        />
        <TaskButton
          label="M"
          icon={
            <svg width="16" height="16" viewBox="0 0 16 16">
              <path d="M3 .5h9l3 3v12H3z" fill="#f4f8f2" stroke="#668a5c" />
              <path d="M1 4h10v9H1z" fill="#3c8a3c" />
              <path d="M3 5.500l6 6M9 5.500l-6 6" stroke="#fff" strokeWidth="1.800" />
            </svg>
          }
        />
        <TaskButton label="N" active icon={<NotepadIcon />} />
      </div>
      <div className="flex-1" />
      <div className="flex shrink-0 flex-col gap-[2px]">
        <button aria-label="Upp" className="flex h-3 w-[13px] items-center justify-center border border-[#2a58c0] bg-[#1c4ec8]">
          <svg width="9" height="6" fill="none"><path d="M1 5l3.500-3.500L8 5" stroke="#fff" strokeWidth="1.800" /></svg>
        </button>
        <button aria-label="Ned" className="flex h-3 w-[13px] items-center justify-center border border-[#2a58c0] bg-[#1c4ec8]">
          <svg width="9" height="6" fill="none"><path d="M1 1l3.500 3.500L8 1" stroke="#fff" strokeWidth="1.800" /></svg>
        </button>
      </div>
      <div className="ml-2 flex h-[21px] w-[260px] shrink-0">
        <input
          aria-label="Sök"
          placeholder="Söka i datorn"
          className="w-0 flex-1 border border-[#7f9db9] bg-white pl-1 text-[11px] outline-none placeholder:text-[#aca899]"
        />
        <button aria-label="Starta sökning" className="flex w-6 items-center justify-center border border-[#d0d4dc] bg-[#e6e8ee]">
          <svg width="14" height="14" fill="none"><circle cx="8.500" cy="5" r="3.800" stroke="#4a8ad8" strokeWidth="1.800" /><path d="M5.500 8l-4 4.500" stroke="#30549c" strokeWidth="2.200" /></svg>
        </button>
      </div>
      <span className="ml-4 flex h-4 w-[17px] shrink-0 items-center justify-center bg-[#2f66cc] text-[10px] text-white">SV</span>
      <div className="ml-[17px] flex shrink-0 items-center">
        <span className="flex h-[23px] w-[55px] items-center justify-center border border-[#b8e89c] bg-[#80ff40] text-[12px] font-bold text-black">100%</span>
        <span className="h-[11px] w-[3px] bg-[#8f9098]" />
      </div>
      <svg width="17" height="14" viewBox="0 0 17 14" className="ml-[9px] shrink-0">
        <path d="M0 7h3M3 4l2-2h6v10H5L3 10zM11 4h5M11 9.500h5" stroke="#000" strokeWidth="2" fill="#000" />
      </svg>
      <div className="ml-[17px] flex h-full w-[190px] shrink-0 items-center border-l border-[#0c4ca8] bg-linear-to-b from-[#1ba4f4] via-[#1290e8] to-[#0f84dc]">
        <button aria-label="Visa dolda ikoner" className="-ml-[10px] shrink-0">
          <svg width="19" height="19" fill="none"><circle cx="9.500" cy="9.500" r="9" fill="#2272e0" stroke="#7ab8f8" /><path d="M11.500 5.500l-4 4 4 4" stroke="#fff" strokeWidth="2" /></svg>
        </button>
        <div className="flex items-center gap-[2px]">
          <svg width="16" height="16" viewBox="0 0 16 16">
            <path d="M1 2l4-1.500h10V12l-4 3H1z" fill="#f7d58c" stroke="#e8a850" />
            <circle cx="9" cy="9" r="5" fill="#fbeccb" stroke="#e09838" />
            <path d="M6 7.500l3 3 3-3" fill="none" stroke="#b8741c" strokeWidth="1.600" />
          </svg>
          <svg width="16" height="16" viewBox="0 0 16 16"><circle cx="10" cy="5.500" r="4.500" fill="#c8e4fb" stroke="#8090b0" strokeWidth="1.300" /><path d="M6.500 9L1 14.500" stroke="#28409c" strokeWidth="2.600" /></svg>
          <svg width="16" height="16" viewBox="0 0 16 16">
            <path d="M1.500 1h8v13h-8z" fill="#d8d8d0" stroke="#555" />
            <path d="M3 3h5M3 5h5M3 7h5" stroke="#555" />
            <circle cx="11" cy="11" r="4.500" fill="#fff" stroke="#2a7a2a" />
            <path d="M9.500 8.500l4 2.500-4 2.500z" fill="#1c8c1c" />
          </svg>
          <svg width="16" height="16" viewBox="-2 0 16 16"><rect x=".5" y=".5" width="11" height="15" rx="5" fill="#1438c8" /><path d="M3.500 5l5 6L6 13.500v-11L8.500 5l-5 6" fill="none" stroke="#fff" strokeWidth="1.200" /></svg>
          <svg width="17" height="16" viewBox="0 0 17 16">
            <path d="M3 1h11v8H3zM6 9h5v2H6zM3 11h11v2H3z" fill="#111" />
            <path d="M5 2.500h7v4.500H5z" fill="#38c8d8" />
            <path d="M1 14.500h15" stroke="#e8e030" strokeWidth="1.600" />
          </svg>
          <svg width="16" height="16" viewBox="0 0 16 16">
            <path d="M6 1h8v7H6z" fill="#6cb4f4" stroke="#d8e8f8" />
            <path d="M1 5h8v7H1z" fill="#4c94e4" stroke="#d8e8f8" />
            <path d="M3 14h5M11 10h3" stroke="#c8d8ec" strokeWidth="2" />
          </svg>
        </div>
        <time className="ml-auto pr-[16px] text-[11px] text-white">4:37 p.m.</time>
      </div>
    </div>
  );
}

export default function App() {
  return (
    <div className={`relative flex h-screen w-full flex-col overflow-hidden bg-[#bfdbff] ${UI}`}>
      <OfficeButton />
      <TitleBar />
      <TabRow />
      <Ribbon />
      <FormulaBar />
      <main className="relative flex min-h-0 flex-1">
        <div className="min-w-0 flex-1 overflow-hidden bg-white">
          <Sheet />
        </div>
        <VScroll />
        <Notepad />
      </main>
      <SheetTabs />
      <StatusBar />
      <Taskbar />
    </div>
  );
}
